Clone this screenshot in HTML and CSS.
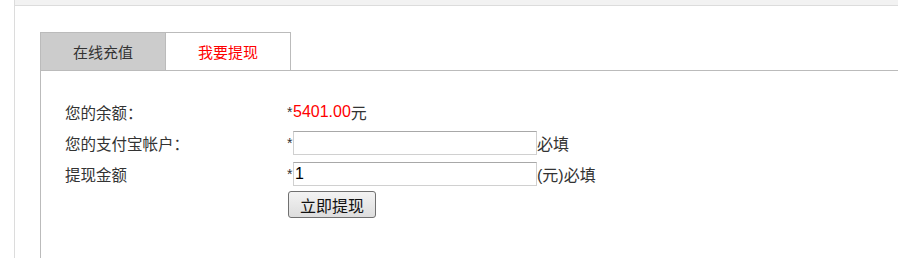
FILE: index.html
```html
<!DOCTYPE html>
<html lang="zh-CN">
<head>
<meta charset="utf-8">
<title>我要提现</title>
<link rel="stylesheet" href="styles.css">
</head>
<body>
<div class="frame">
  <div class="topbar"></div>
  <div class="panel">
    <div class="tabs">
      <div class="tab">在线充值</div>
      <div class="tab active">我要提现</div>
    </div>
    <div class="box">
      <form class="form">
        <div class="label">您的余额<span class="colon">：</span></div>
        <div class="field"><span class="star">*</span><span class="amount">5401.00</span>元</div>
        <div class="label">您的支付宝帐户<span class="colon">：</span></div>
        <div class="field"><span class="star">*</span><input class="input" type="text" value=""><span class="note">必填</span></div>
        <div class="label">提现金额</div>
        <div class="field"><span class="star">*</span><input class="input" type="text" value="1"><span class="note">(元)必填</span></div>
        <div class="label"></div>
        <div class="field"><button class="btn" type="button">立即提现</button></div>
      </form>
    </div>
  </div>
</div>
</body>
</html>
```
FILE: styles.css
```css
html, body {
  margin: 0;
  padding: 0;
  background: #fff;
  height: 100%;
  overflow: hidden;
}
body {
  font-family: "Liberation Sans", "Noto Sans CJK SC", sans-serif;
  color: #333;
}
.frame {
  margin-left: 14px;
  width: 883px;
  height: 100%;
  border-left: 1px solid #dcdcdc;
}
.topbar {
  height: 5px;
  background: #f2f2f2;
  border-bottom: 1px solid #dcdcdc;
}
.panel {
  padding: 26px 0 0 25px;
}
.tabs {
  display: flex;
}
.tab {
  width: 124px;
  height: 37px;
  border: 1px solid #bbb;
  border-bottom: none;
  background: #ccc;
  font-family: "Noto Sans CJK SC", sans-serif;
  font-size: 15px;
  color: #333;
  display: flex;
  align-items: center;
  justify-content: center;
}
.tab + .tab {
  margin-left: -1px;
}
.tab.active {
  background: #fff;
  color: #f00;
}
.box {
  border-top: 1px solid #bbb;
  border-left: 1px solid #bbb;
  margin-right: -40px;
  height: 162px;
  padding: 25px 0 0 24px;
}
.form {
  display: grid;
  grid-template-columns: 222px 1fr;
  grid-auto-rows: 31px;
  align-items: center;
  margin: 0;
}
.label {
  font-family: "Noto Sans CJK SC", sans-serif;
  font-size: 15.5px;
  color: #333;
}
.colon {
  font-family: "Noto Sans CJK TC", sans-serif;
}
.field {
  display: flex;
  align-items: center;
  font-size: 16px;
  color: #333;
  font-family: "Liberation Sans", "Noto Sans CJK SC", sans-serif;
}
.star {
  font-size: 14px;
  color: #333;
  width: 6px;
}
.amount {
  color: #f00;
  font-size: 16px;
}
.input {
  box-sizing: border-box;
  width: 244px;
  height: 24px;
  margin: 0;
  padding: 0 1px;
  border: 1px solid #d0d0d0;
  border-top-color: #a8a8a8;
  font-family: "Liberation Sans", sans-serif;
  font-size: 16px;
  color: #000;
  outline: none;
}
.note {
  font-size: 16px;
  color: #333;
}
.btn {
  box-sizing: border-box;
  margin-left: 1px;
  width: 88px;
  height: 27px;
  border: 1px solid #707070;
  border-radius: 3px;
  background: linear-gradient(#f3f3f3, #dddddd);
  font-family: "Noto Sans CJK SC", sans-serif;
  font-size: 16px;
  color: #111;
  padding: 0;
}
```
